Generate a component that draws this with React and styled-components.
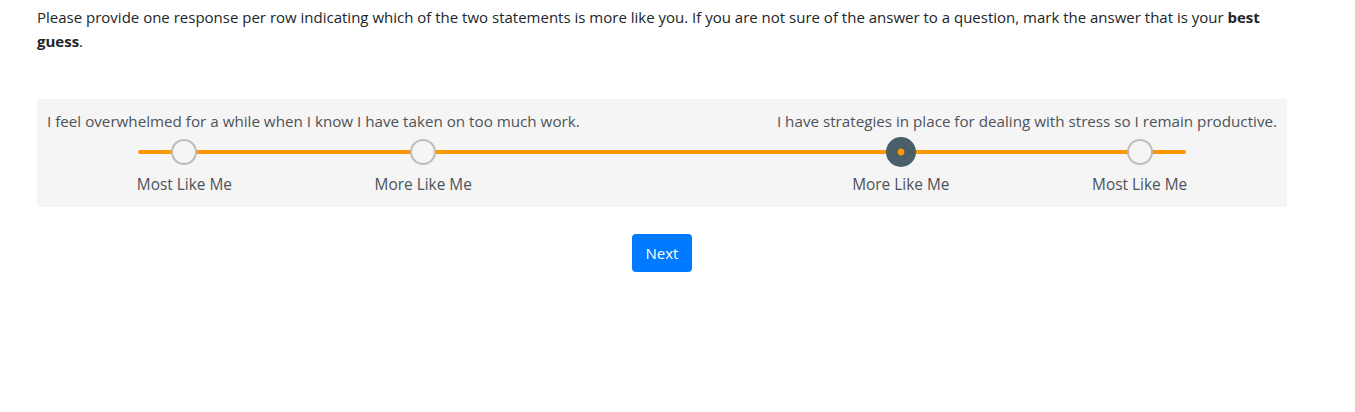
import React, { useState } from "react";
import styled, { createGlobalStyle, css } from "styled-components";

const Global = createGlobalStyle`
  html, body { margin: 0; padding: 0; background: #fff; }
  body { font-family: "Open Sans", "Noto Sans", sans-serif; }
`;

const Page = styled.div`
  padding: 5px 68px 0 37px;
  width: 1250px;
`;

const Intro = styled.p`
  margin: 0;
  font-size: 15px;
  line-height: 24px;
  color: #212529;
  b { font-weight: 700; }
`;

const Panel = styled.div`
  margin-top: 46px;
  background: #f5f5f5;
  border-radius: 3px;
  padding: 11px 10px 12px;
`;

const Statements = styled.div`
  display: flex;
  justify-content: space-between;
  font-size: 15.2px;
  line-height: 22px;
  color: #4d5359;
`;

const Scale = styled.div`
  position: relative;
  display: grid;
  grid-template-columns: repeat(5, 1fr);
  margin: 5px 18px 0;
`;

const Track = styled.div`
  position: absolute;
  left: 73px;
  right: 73px;
  top: 13px;
  height: 4px;
  border-radius: 2px;
  background: #ff9800;
`;

const Option = styled.label`
  position: relative;
  display: flex;
  flex-direction: column;
  align-items: center;
  cursor: pointer;
  visibility: ${(p) => (p.$hidden ? "hidden" : "visible")};
`;

const Knob = styled.span`
  box-sizing: border-box;
  width: 30px;
  height: 30px;
  display: flex;
  align-items: center;
  justify-content: center;
  &::before {
    content: "";
    box-sizing: border-box;
    display: block;
    border-radius: 50%;
    ${(p) =>
      p.$selected
        ? css`
            width: 30px;
            height: 30px;
            background: radial-gradient(circle, #ff9800 0 3.2px, #4b5f6b 3.8px);
          `
        : css`
            width: 26px;
            height: 26px;
            background: #f5f5f5;
            border: 2px solid #bdbdbd;
          `}
  }
`;

const OptionLabel = styled.span`
  margin-top: 8px;
  font-size: 15.4px;
  line-height: 20px;
  color: #4d5359;
  white-space: nowrap;
`;

const Actions = styled.div`
  display: flex;
  justify-content: center;
  margin-top: 27px;
`;

const Button = styled.button`
  width: 60px;
  height: 38px;
  border: none;
  border-radius: 4px;
  background: #007bff;
  color: #fff;
  font-family: inherit;
  font-size: 15px;
  cursor: pointer;
`;

const options = [
  "Most Like Me",
  "More Like Me",
  "",
  "More Like Me",
  "Most Like Me",
];

export default function App() {
  const [value, setValue] = useState(3);
  return (
    <>
      <Global />
      <Page>
        <Intro>
          Please provide one response per row indicating which of the two statements is more like you. If you are not sure of the answer to a question, mark the answer that is your <b>best guess</b>.
        </Intro>
        <Panel>
          <Statements>
            <span>I feel overwhelmed for a while when I know I have taken on too much work.</span>
            <span>I have strategies in place for dealing with stress so I remain productive.</span>
          </Statements>
          <Scale>
            <Track />
            {options.map((o, i) => (
              <Option key={i} $hidden={!o} onClick={() => o && setValue(i)}>
                <Knob $selected={value === i} />
                <OptionLabel>{o || "\u00a0"}</OptionLabel>
              </Option>
            ))}
          </Scale>
        </Panel>
        <Actions>
          <Button>Next</Button>
        </Actions>
      </Page>
    </>
  );
}
